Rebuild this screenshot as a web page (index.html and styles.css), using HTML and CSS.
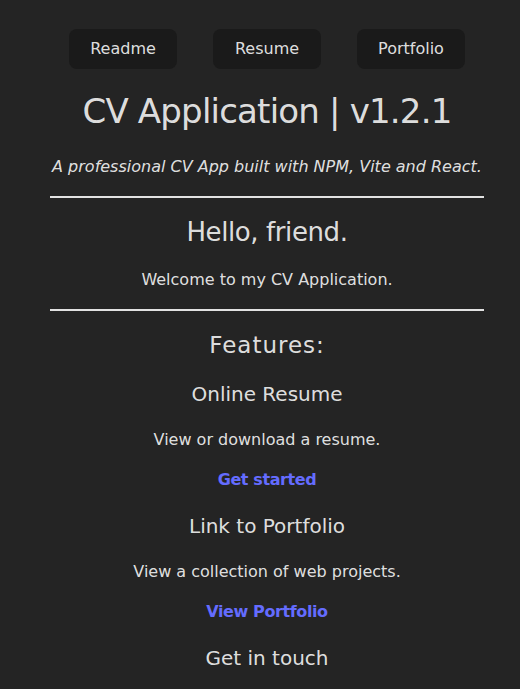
FILE: index.html
```html
<!DOCTYPE html>
<html>
<head>
    <meta charset="UTF-8">
    <meta name="viewport" content="width=device-width, initial-scale=1">
    <title>CV Application</title>
    <link rel="stylesheet" href="styles.css">
</head>
<body>
    <div id="app">
        <nav class="nav">
            <button class="nav-btn">Readme</button>
            <button class="nav-btn">Resume</button>
            <button class="nav-btn">Portfolio</button>
        </nav>
        <h1 class="title">CV Application | v1.2.1</h1>
        <p class="tagline">A professional CV App built with NPM, Vite and React.</p>
        <hr class="rule">
        <section class="intro">
            <h2 class="intro-title">Hello, friend.</h2>
            <p class="text">Welcome to my CV Application.</p>
        </section>
        <hr class="rule">
        <section class="features">
            <h2 class="features-title">Features:</h2>
            <h3 class="feature-name">Online Resume</h3>
            <p class="text">View or download a resume.</p>
            <a class="feature-link" href="#">Get started</a>
            <h3 class="feature-name">Link to Portfolio</h3>
            <p class="text">View a collection of web projects.</p>
            <a class="feature-link" href="#">View Portfolio</a>
            <h3 class="feature-name">Get in touch</h3>
        </section>
    </div>
</body>
</html>
```

FILE: styles.css
```css
body {
    margin: 0;
    background-color: #242424;
    color: rgba(255, 255, 255, 0.87);
    font-family: "DejaVu Sans", "Open Sans", sans-serif;
    font-size: 16px;
}
#app {
    width: 434px;
    margin-left: 50px;
    padding-top: 29px;
    text-align: center;
}
.nav {
    display: flex;
    justify-content: center;
    gap: 36px;
}
.nav-btn {
    width: 108px;
    padding: 9px 0;
    border: 1px solid transparent;
    border-radius: 8px;
    background-color: #1a1a1a;
    color: rgba(255, 255, 255, 0.87);
    font-family: inherit;
    font-size: 16px;
    line-height: 20px;
    cursor: pointer;
}
.title {
    margin: 22px 0 0;
    font-size: 34px;
    font-weight: 400;
    line-height: 40px;
    letter-spacing: -0.8px;
}
.tagline {
    margin: 24px 0 0;
    font-style: italic;
    line-height: 24px;
}
.rule {
    margin: 17px 0 0;
    border: none;
    border-top: 2px solid rgba(255, 255, 255, 0.87);
}
.intro-title {
    margin: 18px 0 0;
    font-size: 26px;
    font-weight: 400;
    line-height: 32px;
    letter-spacing: -0.4px;
}
.text {
    margin: 20px 0 0;
    line-height: 24px;
}
.features-title {
    margin: 19px 0 0;
    font-size: 23px;
    font-weight: 400;
    line-height: 30px;
    letter-spacing: 1px;
}
.feature-name {
    margin: 20px 0 0;
    font-size: 20px;
    font-weight: 400;
    line-height: 28px;
}
.feature-link {
    display: block;
    margin-top: 16px;
    color: #646cff;
    font-weight: 700;
    line-height: 24px;
    letter-spacing: -0.4px;
    text-decoration: none;
}
```
